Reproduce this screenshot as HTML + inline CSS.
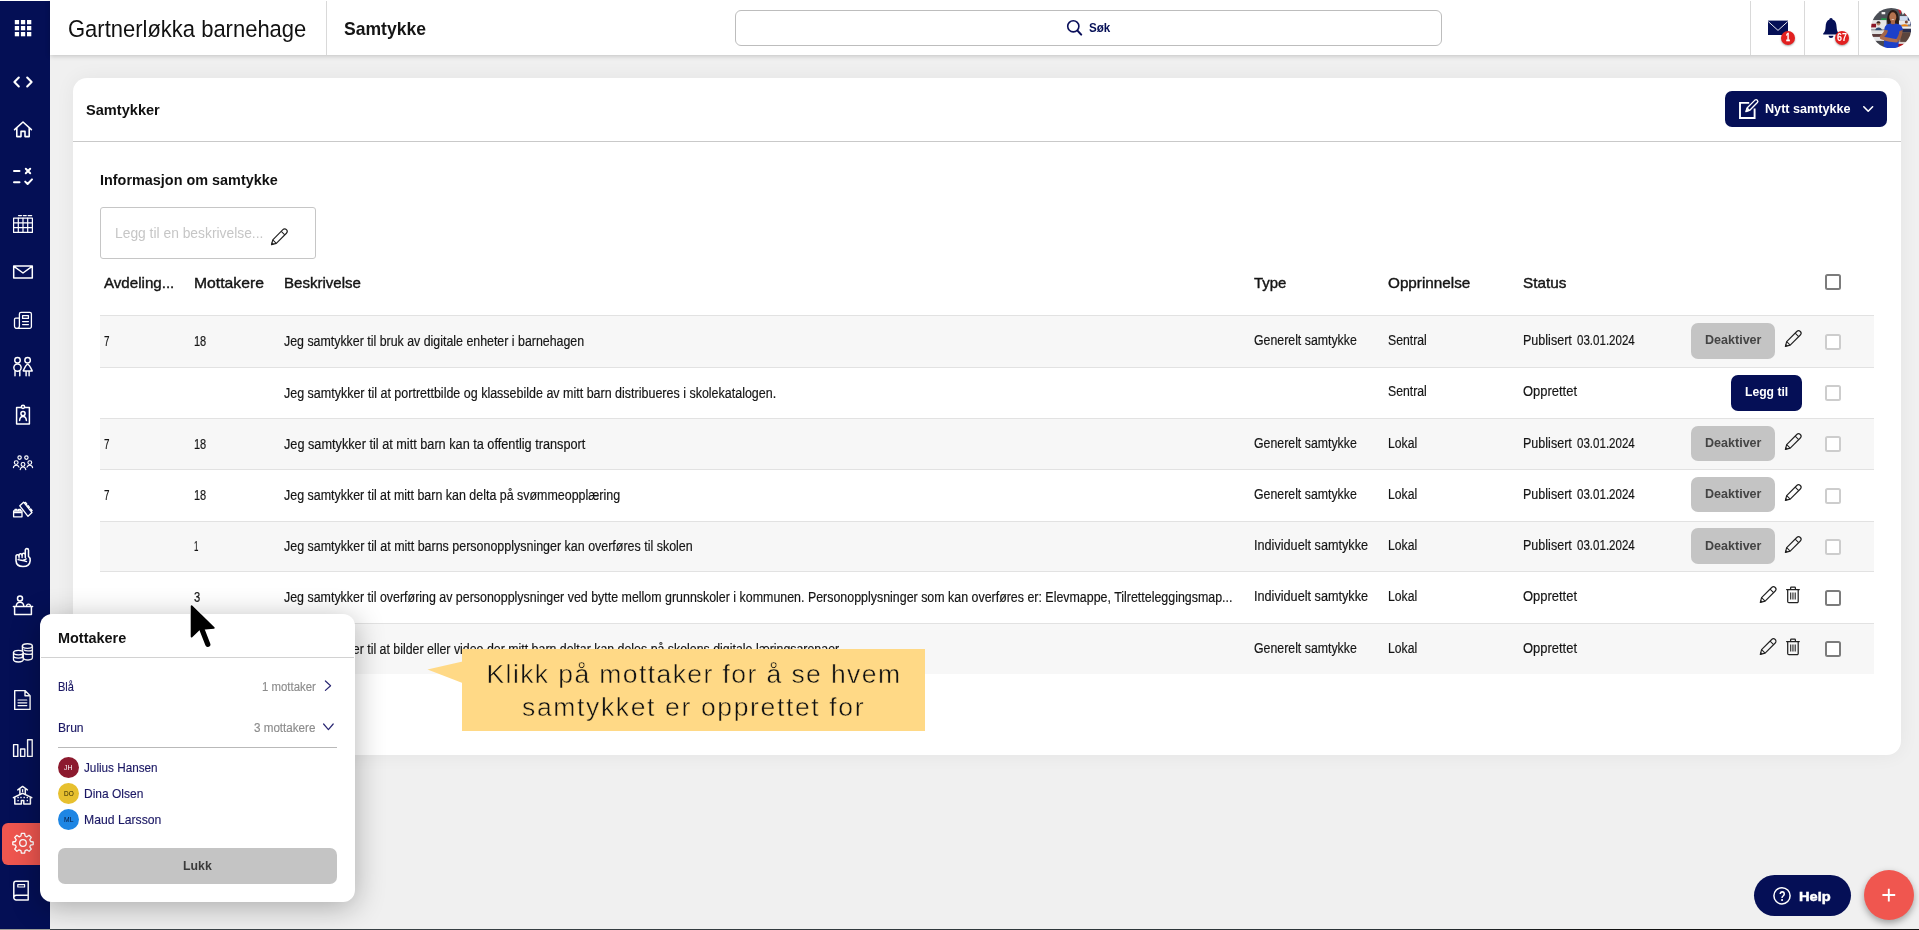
<!DOCTYPE html>
<html lang="nb">
<head>
<meta charset="utf-8">
<title>Samtykke – Gartnerløkka barnehage</title>
<style>
*{box-sizing:border-box}
html,body{margin:0;padding:0}
body{width:1919px;height:930px;overflow:hidden;background:#f0f0f0;position:relative;font-family:"Liberation Sans",sans-serif}
.abs{position:absolute}
.tl{will-change:transform;pointer-events:none}
.t{position:absolute;white-space:pre;transform-origin:0 0;display:block}
#side{left:0;top:1px;width:50px;height:929px;background:#040f55}
#hdr{left:50px;top:0;width:1900px;height:55px;background:#fff;box-shadow:0 1px 5px rgba(0,0,0,.2)}
.vd{position:absolute;top:1px;width:1px;height:54px;background:#d9d9d9}
#search{left:735px;top:10px;width:707px;height:36px;border:1px solid #bdbdbd;border-radius:6px;background:#fff}
#card{left:73px;top:78px;width:1828px;height:677px;background:#fff;border-radius:14px;box-shadow:0 0 20px rgba(0,0,0,.055)}
#cardline{left:73px;top:141px;width:1828px;height:1px;background:#c9c9c9}
.btn-navy{background:#050f56;border-radius:7px}
.btn-gray{background:#c4c4c4;border-radius:7px}
#desc{left:100px;top:207px;width:216px;height:52px;border:1px solid #c6c6c6;border-radius:3px;background:#fff}
.row{position:absolute;left:100px;width:1774px;height:51.25px;border-top:1px solid #e2e2e2}
.row.g{background:#f7f7f7}
.cb{position:absolute;left:1825px;width:16px;height:16px;border:2px solid #cdcdcd;border-radius:2.5px;background:#fff}
.cb.d{border-color:#7c7c7c}
#pop{left:40px;top:614px;width:315px;height:288px;background:#fff;border-radius:12px;box-shadow:0 5px 30px rgba(0,0,0,.30)}
.av{position:absolute;left:58px;width:21px;height:21px;border-radius:50%}
#tip{left:462px;top:649px;width:463px;height:81.5px;background:#ffd986}
#help{left:1754px;top:875px;width:97px;height:41px;border-radius:21px;background:#050f56}
#fab{left:1864px;top:870px;width:50px;height:50px;border-radius:50%;background:#f0564f;box-shadow:0 3px 7px rgba(0,0,0,.35)}
.badge{position:absolute;width:14px;height:14px;border-radius:50%;background:#e22020;box-shadow:0 1px 2px rgba(0,0,0,.35)}
</style>
</head>
<body>
<!-- sidebar -->
<div class="abs" style="left:0;top:0;width:50px;height:1px;background:#fff"></div>
<div id="side" class="abs"></div>
<div class="abs" style="left:2px;top:823px;width:48px;height:42px;background:#ef564f;border-radius:6px 0 0 6px"></div>
<svg class="abs" style="left:0;top:0" width="50" height="930" viewBox="0 0 50 930" fill="none" stroke="#fff" stroke-width="1.5" stroke-linecap="round" stroke-linejoin="round">
<!-- app grid -->
<g fill="#fff" stroke="none">
<rect x="14.8" y="20" width="4.3" height="4.3"/><rect x="20.9" y="20" width="4.3" height="4.3"/><rect x="27" y="20" width="4.3" height="4.3"/>
<rect x="14.8" y="26" width="4.3" height="4.3"/><rect x="20.9" y="26" width="4.3" height="4.3"/><rect x="27" y="26" width="4.3" height="4.3"/>
<rect x="14.8" y="32" width="4.3" height="4.3"/><rect x="20.9" y="32" width="4.3" height="4.3"/><rect x="27" y="32" width="4.3" height="4.3"/>
</g>
<!-- collapse < > -->
<path d="M18.8 77.6 L14.4 82 L18.8 86.4 M27.2 77.6 L31.6 82 L27.2 86.4" stroke-width="2.1"/>
<!-- home -->
<path d="M14.6 129.6 L23 122 L31.4 129.6 M16.8 128 V136.6 H21 V131.4 H25 V136.6 H29.2 V128" stroke-width="1.6"/>
<!-- list check -->
<path d="M14 171 H19.5 M14 182.2 H19.5 M25.8 168.8 L30.2 173.2 M30.2 168.8 L25.8 173.2 M25.2 181.6 L27.6 184 L32 179.4" stroke-width="2"/>
<!-- calendar grid -->
<g stroke-width="1.2">
<rect x="13.6" y="218.2" width="18.8" height="14.2"/>
<path d="M18.3 218.2 V232.4 M23 218.2 V232.4 M27.7 218.2 V232.4 M13.6 222.9 H32.4 M13.6 227.6 H32.4"/>
<path d="M18.6 215.6 H21.4 M23.4 215.6 H26.2 M28.2 215.6 H31.6" stroke-width="1.4"/>
</g>
<!-- mail -->
<path d="M13.7 266 H32.3 V278 H13.7 Z M13.9 266.4 L23 273 L32.1 266.4" stroke-width="1.5"/>
<!-- newspaper -->
<g stroke-width="1.3">
<path d="M19.4 326 V314 a1.6 1.6 0 0 1 1.6 -1.6 H29.8 a1.6 1.6 0 0 1 1.6 1.6 V326.6 a1.8 1.8 0 0 1 -1.8 1.8 H16.8 a2.3 2.3 0 0 1 -2.3 -2.3 V319.4 a1.2 1.2 0 0 1 1.2 -1.2 H19.4 M19.4 326 a2.4 2.4 0 0 1 -2.4 2.4"/>
<rect x="22.6" y="315.6" width="5.8" height="2.8"/>
<path d="M22.6 321.6 H28.4 M22.6 324.6 H28.4"/>
</g>
<!-- boy girl -->
<g stroke-width="1.45">
<circle cx="17.5" cy="360.3" r="2.75"/><circle cx="27.6" cy="360.3" r="2.75"/>
<ellipse cx="17.5" cy="367.6" rx="3.65" ry="3.7"/>
<path d="M15 371.2 V375.7 M19.8 371.2 V375.7"/>
<path d="M27.6 364.2 C26.2 364.2 25.4 366 23.2 370.9 H32.2 C30 366 29 364.2 27.6 364.2 Z M26.1 371.2 V375.7 M29.1 371.2 V375.7"/>
</g>
<!-- id badge -->
<g stroke-width="1.5">
<path d="M21 407.6 H16.6 V424 H29.4 V407.6 H25"/>
<circle cx="23" cy="406.8" r="1.6"/>
<circle cx="23" cy="413.6" r="2.1"/>
<path d="M19.6 420.4 C20 417.4 21.6 416.6 23 416.6 C24.4 416.6 26 417.4 26.4 420.4"/>
</g>
<!-- group -->
<g stroke-width="1.15">
<circle cx="19.6" cy="457.6" r="1.7"/><circle cx="26.4" cy="457.6" r="1.7"/>
<circle cx="16.2" cy="462.6" r="1.9"/><circle cx="29.8" cy="462.6" r="1.9"/><circle cx="23" cy="464.4" r="1.9"/>
<path d="M13.4 467.6 C13.8 465.6 15 465.2 16.2 465.2 C17.4 465.2 18.6 465.8 19 467.2 M27 467.2 C27.4 465.8 28.6 465.2 29.8 465.2 C31 465.2 32.2 465.6 32.6 467.6 M20.2 469.6 C20.6 467.6 21.8 467 23 467 C24.2 467 25.4 467.6 25.8 469.6"/>
</g>
<!-- blocks -->
<g stroke-width="1.3">
<path d="M13.6 511 H22 V516.8 H13.6 Z M13.6 512.6 H22 M15 511 V509.4 H17 V511 M18.6 511 V509.4 H20.6 V511"/>
<path d="M19.8 505.8 L23.6 502.2 L32.0 512.6 L28.0 516.3 Z M24.42 503.21 L25.51 502.33 L26.89 504.04 L25.80 504.92 M27.06 506.48 L28.14 505.60 L29.53 507.31 L28.44 508.19 M29.69 509.75 L30.78 508.87 L32.17 510.58 L31.08 511.46 "/>
</g>
<!-- hand pointing up -->
<g stroke-width="1.55">
<path d="M25.3 557.6 V550.2 a1.6 1.6 0 0 1 3.2 0 V556.4 C30 557.4 30.4 558.8 30.2 560.6 C29.8 564.6 27 566.5 23 566.5 C19 566.5 16.2 564.4 16 560.6 V556.4 a1.5 1.5 0 0 1 3.05 -0.3 V555.4 a1.5 1.5 0 0 1 3.05 -0.3 V554.9 a1.55 1.55 0 0 1 3.2 0"/>
<path d="M19.05 556.2 V558.2 M22.1 555.2 V557.6" stroke-width="1.3"/>
<path d="M18 559.6 C20.4 560.4 23 560.2 26.6 561.6 M23.4 560.3 L26.2 558.9" stroke-width="1.3"/>
</g>
<!-- reception desk -->
<g stroke-width="1.5">
<path d="M13.4 606.6 H32.6 M14.6 606.8 V614.6 H31.4 V606.8"/>
<circle cx="20" cy="598.6" r="2.5"/>
<path d="M16.2 606.2 C16.4 603.2 18.2 602.2 20 602.2 C21.8 602.2 23.6 603.2 23.8 606.2"/>
<path d="M26.6 606 a1.9 1.9 0 0 1 3.8 0" stroke-width="1.3"/>
</g>
<!-- coins -->
<g stroke-width="1.35">
<ellipse cx="27.4" cy="646" rx="5" ry="2.3"/>
<path d="M22.4 646 V657.6 M32.4 646 V657.6 C32.4 660.6 24.4 660.6 23.6 658.6 M24 650 C26 651.4 32.4 651.2 32.4 649.4 M24.4 653.6 C26.4 654.8 32.4 654.8 32.4 653"/>
<ellipse cx="18.4" cy="652.6" rx="4.9" ry="2.3" fill="#050f56"/>
<path d="M13.5 652.6 V659.6 C13.5 662.8 23.3 662.8 23.3 659.6 V652.6 M13.5 656 C13.5 658.8 23.3 658.8 23.3 656" />
</g>
<!-- document -->
<g stroke-width="1.4">
<path d="M14.7 690.6 H25 L30.1 695.8 V709.4 H14.7 Z M25 690.6 V695.8 H30.1"/>
<path d="M18 700 H26.8 M18 702.8 H26.8 M18 705.6 H26.8" stroke-width="1.2"/>
</g>
<!-- bar chart -->
<g stroke-width="1.4">
<rect x="13.6" y="744.6" width="4.2" height="11.8"/><rect x="20.6" y="749" width="4.2" height="7.4"/><rect x="27.6" y="739.8" width="4.6" height="16.6"/>
</g>
<!-- school -->
<g stroke-width="1.5">
<path d="M13.4 797.6 L22.6 793.2 L31.8 797.6 M14.8 797.2 V804 H21.4 V800.6 H23.8 V804 H30.4 V797.2"/>
<path d="M17.8 789.9 L22.6 786.4 L27.4 789.9 M19.9 789.6 V794 M25.3 789.6 V794"/>
<path d="M22.6 789.6 V791.4" stroke-width="1.3"/>
</g>
<g fill="#fff" stroke="none">
<rect x="17.4" y="796.8" width="1.4" height="1.4"/><rect x="20.3" y="796.8" width="1.4" height="1.4"/><rect x="23.5" y="796.8" width="1.4" height="1.4"/><rect x="26.6" y="796.8" width="1.4" height="1.4"/>
<rect x="17.4" y="799.9" width="1.4" height="1.4"/><rect x="26.6" y="799.9" width="1.4" height="1.4"/>
</g>
<!-- settings gear -->
<g stroke-width="1.3">
<circle cx="23" cy="843" r="3.3"/>
<path d="M21.4 833.4 H24.6 L25.1 836 L26.9 836.8 L29.1 835.3 L31.3 837.5 L29.8 839.7 L30.6 841.5 L33.2 842 V844.6 L30.6 845.1 L29.8 846.9 L31.3 849.1 L29.1 851.3 L26.9 849.8 L25.1 850.6 L24.6 853.2 H21.4 L20.9 850.6 L19.1 849.8 L16.9 851.3 L14.7 849.1 L16.2 846.9 L15.4 845.1 L12.8 844.6 V842 L15.4 841.5 L16.2 839.7 L14.7 837.5 L16.9 835.3 L19.1 836.8 L20.9 836 Z"/>
</g>
<!-- book -->
<g stroke-width="1.5">
<path d="M13.8 897.4 V883.4 a2.2 2.2 0 0 1 2.2 -2.2 H28.2 V900 H16.2 a2.4 2.4 0 0 1 0 -4.8 H28.2"/>
<rect x="17.8" y="884.6" width="6.8" height="2.4" stroke-width="1.2"/>
</g>
</svg>

<!-- header -->
<div id="hdr" class="abs">
  <div class="vd" style="left:276px"></div>
  <div class="vd" style="left:1700px"></div>
  <div class="vd" style="left:1754px"></div>
  <div class="vd" style="left:1808px"></div>
</div>
<div id="search" class="abs"></div>
<svg class="abs" style="left:0;top:0" width="1919" height="930" viewBox="0 0 1919 930">
<g fill="none" stroke="#0a0f5a" stroke-linecap="round"><circle cx="1073.3" cy="26.3" r="5.6" stroke-width="1.6"/><path d="M1077.5 30.6 L1081.2 34.6" stroke-width="2.1"/></g>
<path d="M1768 20.6 H1788 V35 H1768 Z" fill="#050f56"/><path d="M1768.3 21.6 L1778 30.4 L1787.7 21.6" fill="none" stroke="#fff" stroke-width="0.9"/>
<path d="M1831 18 C1832.2 18 1832.6 18.8 1832.6 19.6 C1835.6 20.6 1836.4 23.4 1836.6 27 C1836.8 30.4 1837.4 32 1839 33.6 V34.4 H1823.2 V33.6 C1824.8 32 1825.4 30.4 1825.6 27 C1825.8 23.4 1826.6 20.6 1829.4 19.6 C1829.4 18.8 1829.8 18 1831 18 Z M1828.6 35.8 H1833.4 C1833.4 37.2 1832.4 38 1831 38 C1829.6 38 1828.6 37.2 1828.6 35.8 Z" fill="#050f56"/>
</svg>
<div class="badge" style="left:1781px;top:30.8px"></div><div class="badge" style="left:1834.7px;top:30.8px"></div>
<svg class="abs" style="left:1870.8px;top:7.8px" width="40.4" height="40.4" viewBox="0 0 40 40">
<defs><clipPath id="avc"><circle cx="20" cy="20" r="20"/></clipPath><filter id="avb" x="-10%" y="-10%" width="120%" height="120%"><feGaussianBlur stdDeviation="0.55"/></filter></defs>
<g clip-path="url(#avc)"><g filter="url(#avb)">
<rect x="-2" y="-2" width="44" height="44" fill="#8e8f94"/>
<rect x="-2" y="-2" width="44" height="14" fill="#4c4f57"/>
<rect x="10.5" y="4" width="3.6" height="2.2" fill="#f2f2f2"/>
<rect x="10" y="10.2" width="5.5" height="1.6" fill="#1f9a4a"/>
<path d="M26.5 1 L29 6.5 L31 2 Z" fill="#c8202e"/><path d="M29.5 2 L31.5 7 L34 3.5 Z" fill="#f4f4f4"/><path d="M33 4 L34.5 8 L37 6 Z" fill="#c8202e"/>
<rect x="28.5" y="8" width="8" height="4.6" fill="#cddaf0"/>
<rect x="36.5" y="8" width="5" height="9" fill="#1b2a66"/>
<rect x="-2" y="12" width="17" height="9" fill="#e6e6e6"/>
<rect x="27" y="12.5" width="12" height="4" fill="#e9e9ea"/>
<circle cx="35" cy="13.8" r="1.5" fill="#7a4a36"/>
<path d="M29.8 18.4 C30 15.4 36.4 15.2 37 18.4 Z" fill="#f0820f"/>
<rect x="27" y="18.4" width="14" height="2.2" fill="#ededed"/>
<rect x="-2" y="15.6" width="7" height="3.6" fill="#8c1626"/>
<circle cx="7.4" cy="15.4" r="1.9" fill="#b98467"/><path d="M5.4 15 C5.4 12.6 9.4 12.6 9.4 15 Z" fill="#3a2620"/>
<path d="M4.2 22.4 C4.2 18.2 10.8 18.2 10.8 22.4 Z" fill="#2f4a72"/>
<rect x="-2" y="22.2" width="16" height="3.6" fill="#e2e2e2"/>
<rect x="-2" y="25.8" width="16" height="3" fill="#5b3b3b"/>
<rect x="2" y="28.6" width="12" height="4" fill="#e6e6e8"/>
<rect x="0" y="32.6" width="14" height="8" fill="#4a4a50"/>
<rect x="28" y="20.6" width="14" height="3.4" fill="#2b2f4e"/>
<rect x="29" y="24" width="10" height="9.6" fill="#5c443c"/>
<rect x="27" y="33.6" width="12" height="2" fill="#d8d0cc"/>
<rect x="26" y="35.6" width="9" height="4" fill="#b3121f"/>
<path d="M16.6 17.5 C15 12 16 2.6 21.6 2 C27.4 1.6 28 11 27.6 17.6 Z" fill="#2a1a15"/>
<ellipse cx="21.6" cy="9" rx="3.5" ry="4.7" fill="#b5724f"/>
<path d="M20 10.9 C21 11.9 22.4 11.9 23.3 10.9 Z" fill="#f5eeee"/>
<path d="M19.6 12.6 H23.8 V16.4 H19.6 Z" fill="#a86648"/>
<path d="M13.2 21.6 C13.4 17.6 16 15.6 19.4 15.4 C21 16.6 22.6 16.6 24.2 15.4 C28 15.6 31.2 17.6 31.6 21.8 L28.4 23 C27.8 28 27.4 34 27 40 H12.4 C12.8 34 13.6 28 14 22.6 Z" fill="#1f40c9"/>
<path d="M13.4 21.6 L16.8 22.4 C16 25.4 15 27.2 13 28.6 C11.4 29.6 9.4 29 8.6 28 C10.6 26.2 12.4 24.4 13.4 21.6 Z" fill="#a4664a"/>
<path d="M31.4 21.8 L28.2 22.8 C27.8 26 26.6 29 24.6 31.2 L26.8 33.6 C29.8 30.6 31 26.4 31.4 21.8 Z" fill="#9c5f44"/>
<path d="M8.6 27.8 C13 28.6 20 30.2 26 31 L26.6 34 C21 34.4 13 32.4 9 30.4 Z" fill="#ad6d4f"/>
</g></g></svg>
<!-- card -->
<div id="card" class="abs"></div>
<div id="cardline" class="abs"></div>
<div class="abs btn-navy" style="left:1725px;top:91px;width:162px;height:36px"></div>
<div id="desc" class="abs"></div>
<!-- table rows -->
<div class="row g" style="top:315px;height:52px"></div>
<div class="cb" style="top:333.80px"></div>
<div class="abs btn-gray" style="left:1691px;top:323.00px;width:84px;height:35.5px"></div>
<div class="row" style="top:367px;height:51px"></div>
<div class="cb" style="top:385.05px"></div>
<div class="row g" style="top:418px;height:51px"></div>
<div class="cb" style="top:436.30px"></div>
<div class="abs btn-gray" style="left:1691px;top:425.50px;width:84px;height:35.5px"></div>
<div class="row" style="top:469px;height:52px"></div>
<div class="cb" style="top:487.55px"></div>
<div class="abs btn-gray" style="left:1691px;top:476.75px;width:84px;height:35.5px"></div>
<div class="row g" style="top:521px;height:50px"></div>
<div class="cb" style="top:538.80px"></div>
<div class="abs btn-gray" style="left:1691px;top:528.00px;width:84px;height:35.5px"></div>
<div class="row" style="top:571px;height:52px"></div>
<div class="cb d" style="top:590.05px"></div>
<div class="row g" style="top:623px;height:51px"></div>
<div class="cb d" style="top:641.30px"></div>
<div class="abs btn-navy" style="left:1731px;top:374.5px;width:71px;height:36px"></div>
<div class="cb d" style="top:274px"></div>
<svg class="abs" style="left:0;top:0" width="1919" height="930" viewBox="0 0 1919 930">
<path d="M1749.2 102.9 H1740 V118 H1754.6 V108.4" fill="none" stroke="#fff" stroke-width="1.9"/>
<path d="M1745.90 111.60 L1749.54 110.43 L1757.39 102.58 A1.75 1.75 0 0 0 1754.92 100.11 L1747.07 107.96 Z" fill="#050f56" stroke="#fff" stroke-width="1.35" stroke-linejoin="round"/><path d="M1749.54 110.43 L1747.07 107.96" fill="none" stroke="#fff" stroke-width="1.22"/><path d="M1745.90 111.60 L1748.68 110.71 L1746.79 108.82 Z" fill="#fff" stroke="#fff" stroke-width="0.6" stroke-linejoin="round"/>
<path d="M1863.8 106.8 L1868.2 111.2 L1872.6 106.8" fill="none" stroke="#fff" stroke-width="1.6" stroke-linecap="round" stroke-linejoin="round"/>
<path d="M271.50 244.60 L276.31 243.33 L286.42 233.22 A2.5 2.5 0 0 0 282.88 229.68 L272.77 239.79 Z" fill="none" stroke="#222" stroke-width="1.15" stroke-linejoin="round"/><path d="M276.31 243.33 L272.77 239.79 M281.26 231.31 L284.79 234.84" fill="none" stroke="#222" stroke-width="1.03"/><path d="M271.50 244.60 L273.51 244.07 L272.03 242.59 Z" fill="#222" stroke="#222" stroke-width="0.6" stroke-linejoin="round"/>
<path d="M1785.40 346.40 L1790.21 345.13 L1800.32 335.02 A2.5 2.5 0 0 0 1796.78 331.48 L1786.67 341.59 Z" fill="none" stroke="#222" stroke-width="1.15" stroke-linejoin="round"/><path d="M1790.21 345.13 L1786.67 341.59 M1795.16 333.11 L1798.69 336.64" fill="none" stroke="#222" stroke-width="1.03"/><path d="M1785.40 346.40 L1787.41 345.87 L1785.93 344.39 Z" fill="#222" stroke="#222" stroke-width="0.6" stroke-linejoin="round"/>
<path d="M1785.40 449.40 L1790.21 448.13 L1800.32 438.02 A2.5 2.5 0 0 0 1796.78 434.48 L1786.67 444.59 Z" fill="none" stroke="#222" stroke-width="1.15" stroke-linejoin="round"/><path d="M1790.21 448.13 L1786.67 444.59 M1795.16 436.11 L1798.69 439.64" fill="none" stroke="#222" stroke-width="1.03"/><path d="M1785.40 449.40 L1787.41 448.87 L1785.93 447.39 Z" fill="#222" stroke="#222" stroke-width="0.6" stroke-linejoin="round"/>
<path d="M1785.40 500.40 L1790.21 499.13 L1800.32 489.02 A2.5 2.5 0 0 0 1796.78 485.48 L1786.67 495.59 Z" fill="none" stroke="#222" stroke-width="1.15" stroke-linejoin="round"/><path d="M1790.21 499.13 L1786.67 495.59 M1795.16 487.11 L1798.69 490.64" fill="none" stroke="#222" stroke-width="1.03"/><path d="M1785.40 500.40 L1787.41 499.87 L1785.93 498.39 Z" fill="#222" stroke="#222" stroke-width="0.6" stroke-linejoin="round"/>
<path d="M1785.40 552.40 L1790.21 551.13 L1800.32 541.02 A2.5 2.5 0 0 0 1796.78 537.48 L1786.67 547.59 Z" fill="none" stroke="#222" stroke-width="1.15" stroke-linejoin="round"/><path d="M1790.21 551.13 L1786.67 547.59 M1795.16 539.11 L1798.69 542.64" fill="none" stroke="#222" stroke-width="1.03"/><path d="M1785.40 552.40 L1787.41 551.87 L1785.93 550.39 Z" fill="#222" stroke="#222" stroke-width="0.6" stroke-linejoin="round"/>
<path d="M1760.30 602.40 L1765.11 601.13 L1775.22 591.02 A2.5 2.5 0 0 0 1771.68 587.48 L1761.57 597.59 Z" fill="none" stroke="#222" stroke-width="1.15" stroke-linejoin="round"/><path d="M1765.11 601.13 L1761.57 597.59 M1770.06 589.11 L1773.59 592.64" fill="none" stroke="#222" stroke-width="1.03"/><path d="M1760.30 602.40 L1762.31 601.87 L1760.83 600.39 Z" fill="#222" stroke="#222" stroke-width="0.6" stroke-linejoin="round"/>
<g fill="none" stroke="#222" stroke-width="1.25" stroke-linejoin="round" stroke-linecap="round"><path d="M1786.60 589.50 H1799.30 M1790.60 589.30 V588.00 a0.8 0.8 0 0 1 0.8 -0.8 H1794.60 a0.8 0.8 0 0 1 0.8 0.8 V589.30"/><path d="M1787.70 589.80 V601.40 a1.2 1.2 0 0 0 1.2 1.2 H1797.00 a1.2 1.2 0 0 0 1.2 -1.2 V589.80"/><path d="M1790.70 592.40 V599.60 M1792.95 592.40 V599.60 M1795.20 592.40 V599.60" stroke-width="1.1" stroke-linecap="butt"/></g>
<path d="M1760.30 654.40 L1765.11 653.13 L1775.22 643.02 A2.5 2.5 0 0 0 1771.68 639.48 L1761.57 649.59 Z" fill="none" stroke="#222" stroke-width="1.15" stroke-linejoin="round"/><path d="M1765.11 653.13 L1761.57 649.59 M1770.06 641.11 L1773.59 644.64" fill="none" stroke="#222" stroke-width="1.03"/><path d="M1760.30 654.40 L1762.31 653.87 L1760.83 652.39 Z" fill="#222" stroke="#222" stroke-width="0.6" stroke-linejoin="round"/>
<g fill="none" stroke="#222" stroke-width="1.25" stroke-linejoin="round" stroke-linecap="round"><path d="M1786.60 641.50 H1799.30 M1790.60 641.30 V640.00 a0.8 0.8 0 0 1 0.8 -0.8 H1794.60 a0.8 0.8 0 0 1 0.8 0.8 V641.30"/><path d="M1787.70 641.80 V653.40 a1.2 1.2 0 0 0 1.2 1.2 H1797.00 a1.2 1.2 0 0 0 1.2 -1.2 V641.80"/><path d="M1790.70 644.40 V651.60 M1792.95 644.40 V651.60 M1795.20 644.40 V651.60" stroke-width="1.1" stroke-linecap="butt"/></g>
</svg>
<div class="abs tl" style="left:0;top:0;width:1919px;height:930px">
<span class="t" style="left:68.20px;top:14px;font:400 24.5px/29px 'Liberation Sans',sans-serif;color:#111;transform:scaleX(0.8973);">Gartnerløkka barnehage</span>
<span class="t" style="left:344.00px;top:17px;font:700 19px/23px 'Liberation Sans',sans-serif;color:#151515;transform:scaleX(0.9241);">Samtykke</span>
<span class="t" style="left:1089.30px;top:19px;font:700 13.5px/17px 'Liberation Sans',sans-serif;color:#050f56;transform:scaleX(0.8613);">Søk</span>
<span class="t" style="left:86.00px;top:100px;font:700 15.5px/19px 'Liberation Sans',sans-serif;color:#111;transform:scaleX(0.9409);">Samtykker</span>
<span class="t" style="left:1765.00px;top:100px;font:700 13.5px/17px 'Liberation Sans',sans-serif;color:#fff;transform:scaleX(0.9352);">Nytt samtykke</span>
<span class="t" style="left:99.70px;top:170px;font:700 15.5px/19px 'Liberation Sans',sans-serif;color:#111;transform:scaleX(0.9296);">Informasjon om samtykke</span>
<span class="t" style="left:115.40px;top:223px;font:400 15px/19px 'Liberation Sans',sans-serif;color:#c6c6c6;transform:scaleX(0.9220);">Legg til en beskrivelse...</span>
<span class="t" style="left:104.00px;top:273px;font:400 15px/19px 'Liberation Sans',sans-serif;color:#151515;transform:scaleX(1.0078);-webkit-text-stroke:0.4px #151515;">Avdeling...</span>
<span class="t" style="left:194.30px;top:273px;font:400 15px/19px 'Liberation Sans',sans-serif;color:#151515;transform:scaleX(1.0483);-webkit-text-stroke:0.4px #151515;">Mottakere</span>
<span class="t" style="left:284.00px;top:273px;font:400 15px/19px 'Liberation Sans',sans-serif;color:#151515;transform:scaleX(1.0035);-webkit-text-stroke:0.4px #151515;">Beskrivelse</span>
<span class="t" style="left:1253.50px;top:273px;font:400 15px/19px 'Liberation Sans',sans-serif;color:#151515;transform:scaleX(0.9920);-webkit-text-stroke:0.4px #151515;">Type</span>
<span class="t" style="left:1388.00px;top:273px;font:400 15px/19px 'Liberation Sans',sans-serif;color:#151515;transform:scaleX(1.0179);-webkit-text-stroke:0.4px #151515;">Opprinnelse</span>
<span class="t" style="left:1522.80px;top:273px;font:400 15px/19px 'Liberation Sans',sans-serif;color:#151515;transform:scaleX(1.0204);-webkit-text-stroke:0.4px #151515;">Status</span>
<span class="t" style="left:283.90px;top:332px;font:400 14px/18px 'Liberation Sans',sans-serif;color:#151515;transform:scaleX(0.8845);-webkit-text-stroke:0.18px #151515;">Jeg samtykker til bruk av digitale enheter i barnehagen</span>
<span class="t" style="left:104.20px;top:332px;font:400 14px/18px 'Liberation Sans',sans-serif;color:#151515;transform:scaleX(0.7069);-webkit-text-stroke:0.18px #151515;">7</span>
<span class="t" style="left:193.70px;top:332px;font:400 14px/18px 'Liberation Sans',sans-serif;color:#151515;transform:scaleX(0.7848);-webkit-text-stroke:0.18px #151515;">18</span>
<span class="t" style="left:1253.50px;top:331px;font:400 14px/18px 'Liberation Sans',sans-serif;color:#151515;transform:scaleX(0.8809);-webkit-text-stroke:0.18px #151515;">Generelt samtykke</span>
<span class="t" style="left:1388.20px;top:331px;font:400 14px/18px 'Liberation Sans',sans-serif;color:#151515;transform:scaleX(0.8743);-webkit-text-stroke:0.18px #151515;">Sentral</span>
<span class="t" style="left:1523.00px;top:331px;font:400 14px/18px 'Liberation Sans',sans-serif;color:#151515;transform:scaleX(0.8961);-webkit-text-stroke:0.18px #151515;">Publisert</span>
<span class="t" style="left:1577.20px;top:331px;font:400 14px/18px 'Liberation Sans',sans-serif;color:#151515;transform:scaleX(0.8248);-webkit-text-stroke:0.18px #151515;">03.01.2024</span>
<span class="t" style="left:1704.50px;top:331px;font:700 13.5px/17px 'Liberation Sans',sans-serif;color:#444;transform:scaleX(0.9289);">Deaktiver</span>
<span class="t" style="left:283.90px;top:384px;font:400 14px/18px 'Liberation Sans',sans-serif;color:#151515;transform:scaleX(0.8921);-webkit-text-stroke:0.18px #151515;">Jeg samtykker til at portrettbilde og klassebilde av mitt barn distribueres i skolekatalogen.</span>
<span class="t" style="left:1388.20px;top:382px;font:400 14px/18px 'Liberation Sans',sans-serif;color:#151515;transform:scaleX(0.8743);-webkit-text-stroke:0.18px #151515;">Sentral</span>
<span class="t" style="left:1523.00px;top:382px;font:400 14px/18px 'Liberation Sans',sans-serif;color:#151515;transform:scaleX(0.9248);-webkit-text-stroke:0.18px #151515;">Opprettet</span>
<span class="t" style="left:283.90px;top:435px;font:400 14px/18px 'Liberation Sans',sans-serif;color:#151515;transform:scaleX(0.9075);-webkit-text-stroke:0.18px #151515;">Jeg samtykker til at mitt barn kan ta offentlig transport</span>
<span class="t" style="left:104.20px;top:435px;font:400 14px/18px 'Liberation Sans',sans-serif;color:#151515;transform:scaleX(0.7069);-webkit-text-stroke:0.18px #151515;">7</span>
<span class="t" style="left:193.70px;top:435px;font:400 14px/18px 'Liberation Sans',sans-serif;color:#151515;transform:scaleX(0.7848);-webkit-text-stroke:0.18px #151515;">18</span>
<span class="t" style="left:1253.50px;top:434px;font:400 14px/18px 'Liberation Sans',sans-serif;color:#151515;transform:scaleX(0.8809);-webkit-text-stroke:0.18px #151515;">Generelt samtykke</span>
<span class="t" style="left:1388.20px;top:434px;font:400 14px/18px 'Liberation Sans',sans-serif;color:#151515;transform:scaleX(0.8697);-webkit-text-stroke:0.18px #151515;">Lokal</span>
<span class="t" style="left:1523.00px;top:434px;font:400 14px/18px 'Liberation Sans',sans-serif;color:#151515;transform:scaleX(0.8961);-webkit-text-stroke:0.18px #151515;">Publisert</span>
<span class="t" style="left:1577.20px;top:434px;font:400 14px/18px 'Liberation Sans',sans-serif;color:#151515;transform:scaleX(0.8248);-webkit-text-stroke:0.18px #151515;">03.01.2024</span>
<span class="t" style="left:1704.50px;top:434px;font:700 13.5px/17px 'Liberation Sans',sans-serif;color:#444;transform:scaleX(0.9289);">Deaktiver</span>
<span class="t" style="left:283.90px;top:486px;font:400 14px/18px 'Liberation Sans',sans-serif;color:#151515;transform:scaleX(0.8888);-webkit-text-stroke:0.18px #151515;">Jeg samtykker til at mitt barn kan delta på svømmeopplæring</span>
<span class="t" style="left:104.20px;top:486px;font:400 14px/18px 'Liberation Sans',sans-serif;color:#151515;transform:scaleX(0.7069);-webkit-text-stroke:0.18px #151515;">7</span>
<span class="t" style="left:193.70px;top:486px;font:400 14px/18px 'Liberation Sans',sans-serif;color:#151515;transform:scaleX(0.7848);-webkit-text-stroke:0.18px #151515;">18</span>
<span class="t" style="left:1253.50px;top:485px;font:400 14px/18px 'Liberation Sans',sans-serif;color:#151515;transform:scaleX(0.8809);-webkit-text-stroke:0.18px #151515;">Generelt samtykke</span>
<span class="t" style="left:1388.20px;top:485px;font:400 14px/18px 'Liberation Sans',sans-serif;color:#151515;transform:scaleX(0.8697);-webkit-text-stroke:0.18px #151515;">Lokal</span>
<span class="t" style="left:1523.00px;top:485px;font:400 14px/18px 'Liberation Sans',sans-serif;color:#151515;transform:scaleX(0.8961);-webkit-text-stroke:0.18px #151515;">Publisert</span>
<span class="t" style="left:1577.20px;top:485px;font:400 14px/18px 'Liberation Sans',sans-serif;color:#151515;transform:scaleX(0.8248);-webkit-text-stroke:0.18px #151515;">03.01.2024</span>
<span class="t" style="left:1704.50px;top:485px;font:700 13.5px/17px 'Liberation Sans',sans-serif;color:#444;transform:scaleX(0.9289);">Deaktiver</span>
<span class="t" style="left:283.90px;top:537px;font:400 14px/18px 'Liberation Sans',sans-serif;color:#151515;transform:scaleX(0.8903);-webkit-text-stroke:0.18px #151515;">Jeg samtykker til at mitt barns personopplysninger kan overføres til skolen</span>
<span class="t" style="left:193.90px;top:537px;font:400 14px/18px 'Liberation Sans',sans-serif;color:#151515;transform:scaleX(0.5655);-webkit-text-stroke:0.18px #151515;">1</span>
<span class="t" style="left:1253.50px;top:536px;font:400 14px/18px 'Liberation Sans',sans-serif;color:#151515;transform:scaleX(0.9050);-webkit-text-stroke:0.18px #151515;">Individuelt samtykke</span>
<span class="t" style="left:1388.20px;top:536px;font:400 14px/18px 'Liberation Sans',sans-serif;color:#151515;transform:scaleX(0.8697);-webkit-text-stroke:0.18px #151515;">Lokal</span>
<span class="t" style="left:1523.00px;top:536px;font:400 14px/18px 'Liberation Sans',sans-serif;color:#151515;transform:scaleX(0.8961);-webkit-text-stroke:0.18px #151515;">Publisert</span>
<span class="t" style="left:1577.20px;top:536px;font:400 14px/18px 'Liberation Sans',sans-serif;color:#151515;transform:scaleX(0.8248);-webkit-text-stroke:0.18px #151515;">03.01.2024</span>
<span class="t" style="left:1704.50px;top:537px;font:700 13.5px/17px 'Liberation Sans',sans-serif;color:#444;transform:scaleX(0.9289);">Deaktiver</span>
<span class="t" style="left:283.90px;top:588px;font:400 14px/18px 'Liberation Sans',sans-serif;color:#151515;transform:scaleX(0.8871);-webkit-text-stroke:0.18px #151515;">Jeg samtykker til overføring av personopplysninger ved bytte mellom grunnskoler i kommunen. Personopplysninger som kan overføres er: Elevmappe, Tilretteleggingsmap...</span>
<span class="t" style="left:193.80px;top:588px;font:400 14px/18px 'Liberation Sans',sans-serif;color:#151515;transform:scaleX(0.7969);-webkit-text-stroke:0.18px #151515;">3</span>
<span class="t" style="left:1253.50px;top:587px;font:400 14px/18px 'Liberation Sans',sans-serif;color:#151515;transform:scaleX(0.9050);-webkit-text-stroke:0.18px #151515;">Individuelt samtykke</span>
<span class="t" style="left:1388.20px;top:587px;font:400 14px/18px 'Liberation Sans',sans-serif;color:#151515;transform:scaleX(0.8697);-webkit-text-stroke:0.18px #151515;">Lokal</span>
<span class="t" style="left:1523.00px;top:587px;font:400 14px/18px 'Liberation Sans',sans-serif;color:#151515;transform:scaleX(0.9248);-webkit-text-stroke:0.18px #151515;">Opprettet</span>
<span class="t" style="left:283.90px;top:640px;font:400 14px/18px 'Liberation Sans',sans-serif;color:#151515;transform:scaleX(0.8840);-webkit-text-stroke:0.18px #151515;">Jeg samtykker til at bilder eller video der mitt barn deltar kan deles på skolens digitale læringsarenaer</span>
<span class="t" style="left:1253.50px;top:639px;font:400 14px/18px 'Liberation Sans',sans-serif;color:#151515;transform:scaleX(0.8809);-webkit-text-stroke:0.18px #151515;">Generelt samtykke</span>
<span class="t" style="left:1388.20px;top:639px;font:400 14px/18px 'Liberation Sans',sans-serif;color:#151515;transform:scaleX(0.8697);-webkit-text-stroke:0.18px #151515;">Lokal</span>
<span class="t" style="left:1523.00px;top:639px;font:400 14px/18px 'Liberation Sans',sans-serif;color:#151515;transform:scaleX(0.9248);-webkit-text-stroke:0.18px #151515;">Opprettet</span>
<span class="t" style="left:1744.50px;top:383px;font:700 13.5px/17px 'Liberation Sans',sans-serif;color:#fff;transform:scaleX(0.9001);">Legg til</span>
</div>
<!-- popup -->
<div id="pop" class="abs"></div>
<div class="abs" style="left:41px;top:657px;width:313px;height:1px;background:#d2d2d2"></div>
<div class="abs" style="left:58px;top:747px;width:279px;height:1px;background:#b9b9b9"></div>
<div class="av" style="top:757px;background:#8c1a2e"></div>
<div class="av" style="top:783px;background:#e7c02f"></div>
<div class="av" style="top:809px;background:#1e86e4"></div>
<div class="abs btn-gray" style="left:58px;top:848px;width:279px;height:36px"></div>
<!-- tooltip -->
<div id="tip" class="abs"></div>
<!-- help + fab -->
<div id="help" class="abs"></div>
<div id="fab" class="abs"></div>
<svg class="abs" style="left:0;top:0" width="1919" height="930" viewBox="0 0 1919 930">
<path d="M325.4 681 L330.6 685.7 L325.4 690.4 M323.6 724 L328.4 729.6 L333.2 724" fill="none" stroke="#2a2773" stroke-width="1.2" stroke-linecap="round" stroke-linejoin="round"/>
<path d="M462.5 661.5 L427.5 669.5 L462.5 683 Z" fill="#ffd986"/>
<circle cx="1782" cy="895.8" r="8.1" fill="none" stroke="#fff" stroke-width="1.5"/>
<path d="M1882.4 895 H1895.2 M1888.8 888.8 V901.4" stroke="#fff" stroke-width="1.9" fill="none"/>
</svg>
<div class="abs tl" style="left:0;top:0;width:1919px;height:930px">
<span class="t" style="left:58.40px;top:628px;font:700 15.5px/19px 'Liberation Sans',sans-serif;color:#111;transform:scaleX(0.9326);">Mottakere</span>
<span class="t" style="left:58.40px;top:678px;font:400 13px/17px 'Liberation Sans',sans-serif;color:#1b1864;transform:scaleX(0.8485);-webkit-text-stroke:0.15px #1b1864;">Blå</span>
<span class="t" style="left:261.60px;top:679px;font:400 12.5px/16px 'Liberation Sans',sans-serif;color:#8c8c8c;transform:scaleX(0.9107);-webkit-text-stroke:0.15px #8c8c8c;">1 mottaker</span>
<span class="t" style="left:58.40px;top:719px;font:400 13px/17px 'Liberation Sans',sans-serif;color:#1b1864;transform:scaleX(0.9330);-webkit-text-stroke:0.15px #1b1864;">Brun</span>
<span class="t" style="left:254.00px;top:720px;font:400 12.5px/16px 'Liberation Sans',sans-serif;color:#8c8c8c;transform:scaleX(0.9302);-webkit-text-stroke:0.15px #8c8c8c;">3 mottakere</span>
<span class="t" style="left:84.00px;top:759px;font:400 13.5px/17px 'Liberation Sans',sans-serif;color:#1b1864;transform:scaleX(0.8682);-webkit-text-stroke:0.15px #1b1864;">Julius Hansen</span>
<span class="t" style="left:84.00px;top:785px;font:400 13.5px/17px 'Liberation Sans',sans-serif;color:#1b1864;transform:scaleX(0.8881);-webkit-text-stroke:0.15px #1b1864;">Dina Olsen</span>
<span class="t" style="left:84.00px;top:811px;font:400 13.5px/17px 'Liberation Sans',sans-serif;color:#1b1864;transform:scaleX(0.9037);-webkit-text-stroke:0.15px #1b1864;">Maud Larsson</span>
<span class="t" style="left:64.30px;top:762px;font:400 7.5px/11px 'Liberation Sans',sans-serif;color:#fff;transform:scaleX(0.9066);">JH</span>
<span class="t" style="left:63.60px;top:788px;font:400 7.5px/11px 'Liberation Sans',sans-serif;color:#2a2200;transform:scaleX(0.8622);">DO</span>
<span class="t" style="left:63.80px;top:814px;font:400 7.5px/11px 'Liberation Sans',sans-serif;color:#04153a;transform:scaleX(0.9014);">ML</span>
<span class="t" style="left:182.70px;top:857px;font:700 13.5px/17px 'Liberation Sans',sans-serif;color:#3a3a3a;transform:scaleX(0.9115);">Lukk</span>
<span class="t" style="left:486.50px;top:658px;font:400 26.5px/32px 'Liberation Sans',sans-serif;color:#111;transform:scaleX(1.0000);letter-spacing:1.412px;-webkit-text-stroke:0.5px #ffd986;">Klikk på mottaker for å se hvem</span>
<span class="t" style="left:522.00px;top:691px;font:400 26.5px/32px 'Liberation Sans',sans-serif;color:#111;transform:scaleX(1.0000);letter-spacing:1.643px;-webkit-text-stroke:0.5px #ffd986;">samtykket er opprettet for</span>
<span class="t" style="left:1785.70px;top:31px;font:700 10px/13px 'Liberation Sans',sans-serif;color:#fff;transform:scaleX(0.7026);-webkit-text-stroke:0.4px #fff;">1</span>
<span class="t" style="left:1836.50px;top:31px;font:700 10px/13px 'Liberation Sans',sans-serif;color:#fff;transform:scaleX(0.8918);">67</span>
<span class="t" style="left:1798.60px;top:888px;font:700 13.5px/17px 'Liberation Sans',sans-serif;color:#fff;transform:scaleX(1.0842);-webkit-text-stroke:0.5px #fff;">Help</span>
<span class="t" style="left:1778.90px;top:887px;font:700 14px/18px 'Liberation Sans',sans-serif;color:#fff;transform:scaleX(0.7719);">?</span>
</div>
<svg class="abs" style="left:180px;top:595px" width="50" height="62" viewBox="180 595 50 62">
<path d="M191.6 606.2 V636.6 L199.4 629.2 L213.8 627.9 Z" fill="#000" stroke="#fff" stroke-width="3.2" stroke-linejoin="round"/>
<path d="M201.6 628.5 L207.8 644.4" stroke="#fff" stroke-width="6.6" stroke-linecap="round"/>
<path d="M191.6 606.2 V636.6 L199.4 629.2 L213.8 627.9 Z" fill="#000" stroke="#000" stroke-width="1.8" stroke-linejoin="round"/>
<path d="M201.6 628.5 L207.8 644.4" stroke="#000" stroke-width="5.2" stroke-linecap="round"/>
</svg>
<div class="abs" style="left:0;top:929px;width:1919px;height:1px;background:linear-gradient(90deg,#9c9c96 0,#9c9c96 50px,#3c4448 50px,#2a3236 1400px,#111 1600px)"></div>
</body>
</html>
